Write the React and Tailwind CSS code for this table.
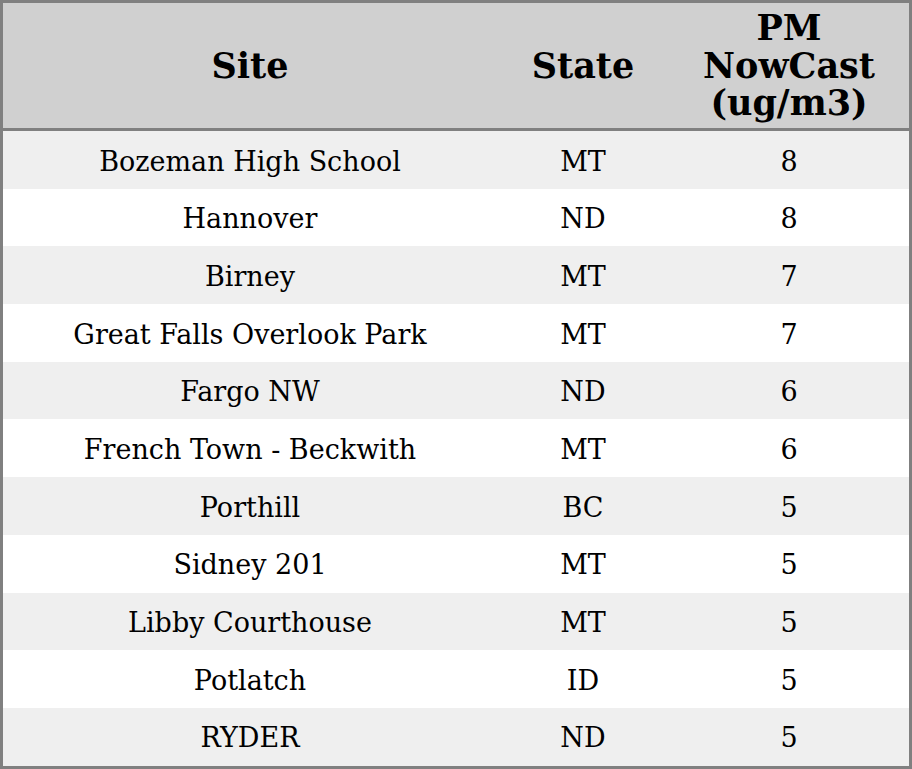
import React from 'react'

const rows = [
  ['Bozeman High School', 'MT', '8'],
  ['Hannover', 'ND', '8'],
  ['Birney', 'MT', '7'],
  ['Great Falls Overlook Park', 'MT', '7'],
  ['Fargo NW', 'ND', '6'],
  ['French Town - Beckwith', 'MT', '6'],
  ['Porthill', 'BC', '5'],
  ['Sidney 201', 'MT', '5'],
  ['Libby Courthouse', 'MT', '5'],
  ['Potlatch', 'ID', '5'],
  ['RYDER', 'ND', '5'],
]

const App = () => {
  return (
    <div className="w-[912px] h-[769px] border-[3px] border-[#808080] bg-white text-black font-['DejaVu_Serif',serif]">
      <div className="grid grid-cols-[494px_172px_240px] h-[128px] bg-[#d0d0d0] border-b-[3px] border-[#808080] text-[35px] font-bold leading-[37.5px] text-center">
        <div className="flex items-center justify-center">Site</div>
        <div className="flex items-center justify-center">State</div>
        <div className="flex items-center justify-center">PM<br />NowCast<br />(ug/m3)</div>
      </div>
      {rows.map((r, i) => (
        <div
          key={i}
          className={`grid grid-cols-[494px_172px_240px] h-[57.7px] pt-[4px] text-[27px] text-center items-center ${i % 2 === 0 ? 'bg-[#efefef]' : 'bg-white'}`}
        >
          <div>{r[0]}</div>
          <div>{r[1]}</div>
          <div>{r[2]}</div>
        </div>
      ))}
    </div>
  )
}

export default App
